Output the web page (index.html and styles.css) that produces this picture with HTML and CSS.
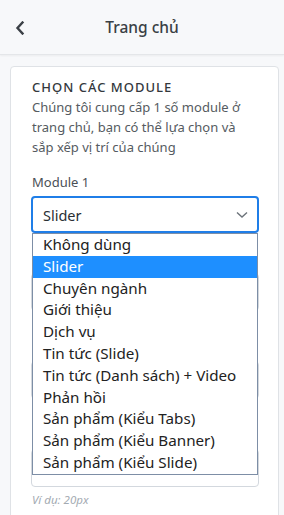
FILE: index.html
```html
<!DOCTYPE html>
<html lang="vi">
<head>
<meta charset="utf-8">
<title>Trang chủ</title>
<link rel="stylesheet" href="styles.css">
</head>
<body>
<header class="topbar">
  <button class="back" aria-label="Quay lại">
    <svg width="10" height="14" viewBox="0 0 10 14"><path d="M7.5 1.5 L2.5 7 L7.5 12.5" fill="none" stroke="#3b4046" stroke-width="2.4" stroke-linecap="square" stroke-linejoin="miter"/></svg>
  </button>
  <h1 class="title">Trang chủ</h1>
</header>
<main class="page">
  <section class="card">
    <h2 class="card-title">CHỌN CÁC MODULE</h2>
    <p class="card-desc">Chúng tôi cung cấp 1 số module ở trang chủ, bạn có thể lựa chọn và sắp xếp vị trí của chúng</p>

    <div class="field first">
      <label class="label">Module 1</label>
      <div class="select-wrap">
        <div class="select">
          <span>Slider</span>
          <svg class="caret" width="12" height="8" viewBox="0 0 12 8"><path d="M1 1.5 L6 6 L11 1.5" fill="none" stroke="#6c737a" stroke-width="1.4"/></svg>
        </div>
        <ul class="options">
          <li>Không dùng</li>
          <li class="active">Slider</li>
          <li>Chuyên ngành</li>
          <li>Giới thiệu</li>
          <li>Dịch vụ</li>
          <li>Tin tức (Slide)</li>
          <li>Tin tức (Danh sách) + Video</li>
          <li>Phản hồi</li>
          <li>Sản phẩm (Kiểu Tabs)</li>
          <li>Sản phẩm (Kiểu Banner)</li>
          <li>Sản phẩm (Kiểu Slide)</li>
        </ul>
      </div>
    </div>

    <div class="field f2">
      <div class="label-space"></div>
      <div class="control"></div>
    </div>
    <div class="field f3">
      <div class="label-space"></div>
      <div class="control"></div>
    </div>
    <div class="field f3">
      <div class="label-space"></div>
      <div class="control"></div>
      <p class="hint">Ví dụ: 20px</p>
    </div>
  </section>
</main>
</body>
</html>
```

FILE: styles.css
```css
* { box-sizing: border-box; }
html, body { margin: 0; padding: 0; }
body {
  width: 284px;
  height: 515px;
  overflow: hidden;
  background: #f7f8fa;
  font-family: "Noto Sans", "Open Sans", sans-serif;
  color: #333;
}
.topbar {
  height: 55px;
  display: flex;
  align-items: center;
  justify-content: center;
  position: relative;
  background: #f7f8fa;
  border-bottom: 1px solid #e4e6e9;
  box-shadow: 0 1px 2px rgba(0,0,0,0.05);
}
.back {
  position: absolute;
  left: 14px;
  top: 20px;
  border: 0;
  background: none;
  padding: 0;
  width: 12px;
  height: 16px;
  display: flex;
  align-items: center;
  justify-content: center;
}
.title {
  margin: 0;
  font-size: 15.5px;
  font-weight: 500;
  color: #3a3f45;
}
.page {
  padding: 11px 5px 0 10px;
}
.card {
  background: #fff;
  border: 1px solid #dfe2e6;
  border-radius: 4px;
  padding: 10px 20px 20px 21px;
  height: 470px;
}
.card-title {
  margin: 0;
  font-size: 13px;
  line-height: 20px;
  font-weight: 500;
  letter-spacing: 1px;
  color: #33383d;
}
.card-desc {
  margin: 0;
  font-size: 13px;
  line-height: 20px;
  color: #555b61;
}
.field { margin-top: 26px; }
.field.first { margin-top: 15px; }
.field.f2 { margin-top: 16px; }
.label {
  display: block;
  font-size: 13px;
  line-height: 20px;
  color: #4a5056;
  margin-bottom: 4px;
}
.label-space {
  height: 20px;
  margin-bottom: 4px;
}
.select-wrap {
  position: relative;
  margin-left: -1px;
  width: 228px;
}
.select {
  height: 37px;
  border: 2px solid #1f7ee8;
  border-radius: 4px;
  display: flex;
  align-items: center;
  justify-content: space-between;
  padding: 0 9px 0 10px;
  font-size: 14.5px;
  color: #2a2f34;
  background: #fff;
}
.options {
  position: absolute;
  left: 1px;
  top: 37px;
  width: 226px;
  margin: 0;
  padding: 0;
  list-style: none;
  background: #fff;
  border: 1px solid #7d8ea6;
  z-index: 2;
}
.options li {
  height: 21.8px;
  line-height: 21.8px;
  padding-left: 10px;
  font-size: 15.2px;
  color: #222;
  white-space: nowrap;
}
.options li.active {
  background: #1e8fff;
  color: #fff;
}
.control {
  margin-left: -1px;
  width: 228px;
  height: 38px;
  border: 1px solid #d3d8de;
  border-radius: 4px;
}
.hint {
  margin: 4px 0 0 0;
  font-size: 11.5px;
  line-height: 18px;
  font-style: italic;
  color: #a3aab2;
}
```
